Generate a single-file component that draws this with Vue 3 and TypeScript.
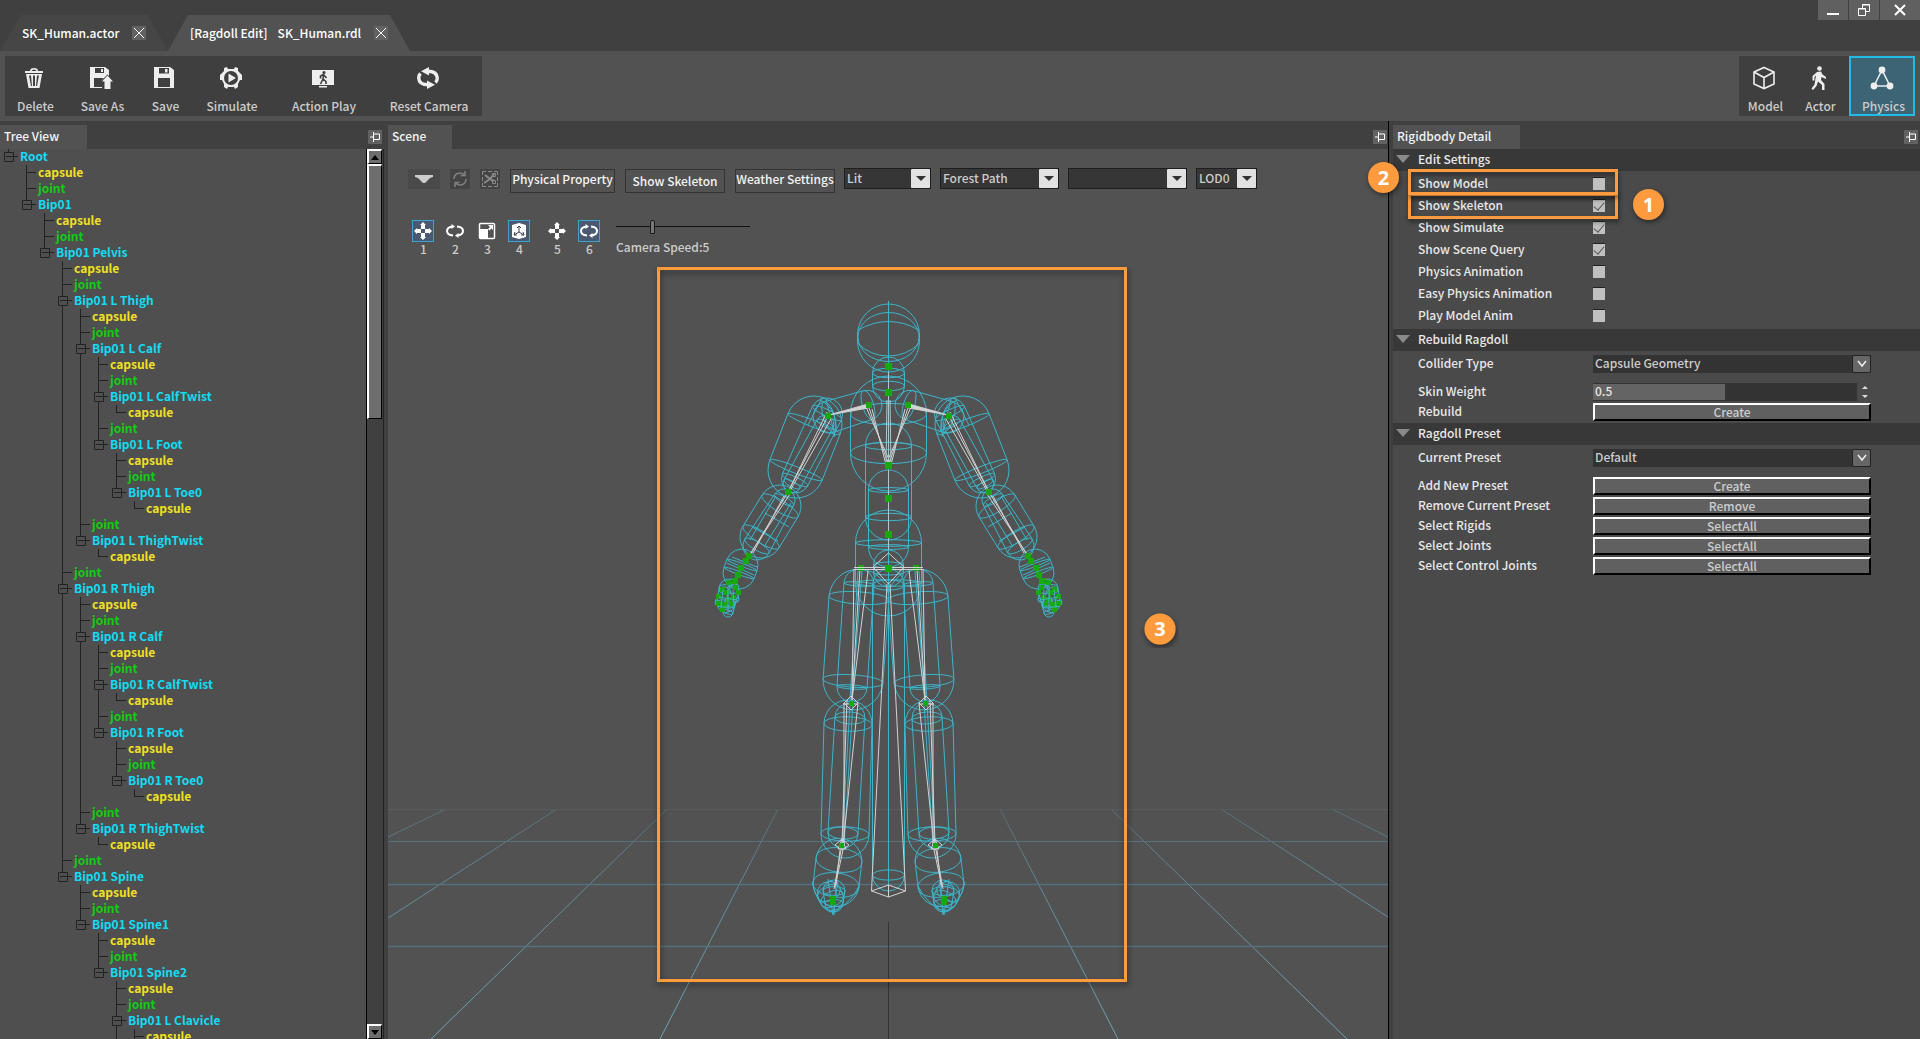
<script setup lang="ts">
import { ref } from 'vue'

type Kind = 'bone' | 'capsule' | 'joint'
interface Node { depth: number; label: string; kind: Kind; more?: boolean }

const bone = (depth: number, label: string, more = false): Node => ({ depth, label, kind: 'bone', more })
const cap = (depth: number): Node => ({ depth, label: 'capsule', kind: 'capsule' })
const joint = (depth: number): Node => ({ depth, label: 'joint', kind: 'joint' })

const leg = (side: string): Node[] => [
  bone(3, `Bip01 ${side} Thigh`), cap(4), joint(4),
  bone(4, `Bip01 ${side} Calf`), cap(5), joint(5),
  bone(5, `Bip01 ${side} CalfTwist`), cap(6), joint(5),
  bone(5, `Bip01 ${side} Foot`), cap(6), joint(6),
  bone(6, `Bip01 ${side} Toe0`), cap(7), joint(4),
  bone(4, `Bip01 ${side} ThighTwist`), cap(5), joint(3),
]

const nodes: Node[] = [
  bone(0, 'Root'), cap(1), joint(1),
  bone(1, 'Bip01'), cap(2), joint(2),
  bone(2, 'Bip01 Pelvis'), cap(3), joint(3),
  ...leg('L'), ...leg('R'),
  bone(3, 'Bip01 Spine'), cap(4), joint(4),
  bone(4, 'Bip01 Spine1'), cap(5), joint(5),
  bone(5, 'Bip01 Spine2'), cap(6), joint(6),
  bone(6, 'Bip01 L Clavicle', true), cap(7),
]

// true when a sibling at the given depth follows row i
function continues(i: number, depth: number): boolean {
  for (let j = i + 1; j < nodes.length; j++) {
    if (nodes[j].depth < depth) return false
    if (nodes[j].depth === depth) return true
  }
  for (let j = nodes.length - 1; j >= 0; j--) {
    if (nodes[j].depth === depth) return j <= i && !!nodes[j].more
    if (nodes[j].depth < depth) return false
  }
  return false
}

function guide(i: number, level: number): string {
  const n = nodes[i]
  if (level < n.depth) return level > 0 && continues(i, level) ? 'M6.5 0V16' : ''
  const down = continues(i, level) || (n.kind !== 'bone' && i === nodes.length - 1)
  if (n.kind === 'bone') return `M6.5 0V3M2.5 3.5H11.5V12.5H2.5ZM4 7.5H16${down ? 'M6.5 13V16' : ''}`
  return `M6.5 0V${down ? 16 : 8}M6 7.5H16`
}

const tree = nodes.map((n, i) => ({
  ...n,
  guides: Array.from({ length: n.depth + 1 }, (_, l) => guide(i, l)),
}))

interface Check { id: string; label: string; on: boolean }
const checks = ref<Check[]>([
  { id: 'show-model', label: 'Show Model', on: false },
  { id: 'show-skeleton', label: 'Show Skeleton', on: true },
  { id: 'show-simulate', label: 'Show Simulate', on: true },
  { id: 'show-query', label: 'Show Scene Query', on: true },
  { id: 'physics-anim', label: 'Physics Animation', on: false },
  { id: 'easy-anim', label: 'Easy Physics Animation', on: false },
  { id: 'play-anim', label: 'Play Model Anim', on: false },
])

const presetActions = [
  { label: 'Add New Preset', action: 'Create' },
  { label: 'Remove Current Preset', action: 'Remove' },
  { label: 'Select Rigids', action: 'SelectAll' },
  { label: 'Select Joints', action: 'SelectAll' },
  { label: 'Select Control Joints', action: 'SelectAll' },
]

const skinWeight = ref('0.5')
const speed = ref(26)

// Wireframe capsule between two centres, with a ring at each end
function capsule(x1: number, y1: number, r1: number, x2: number, y2: number, r2: number, k = 0.22): string {
  const a = Math.atan2(y2 - y1, x2 - x1)
  const nx = -Math.sin(a)
  const ny = Math.cos(a)
  const deg = ((a * 180) / Math.PI - 90).toFixed(1)
  const pt = (x: number, y: number, r: number) => `${(x + nx * r).toFixed(1)} ${(y + ny * r).toFixed(1)}`
  const ring = (x: number, y: number, r: number) =>
    `M${pt(x, y, r)}A${r} ${r * k} ${deg} 1 0 ${pt(x, y, -r)}A${r} ${r * k} ${deg} 1 0 ${pt(x, y, r)}`
  return `M${pt(x1, y1, r1)}L${pt(x2, y2, r2)}A${r2} ${r2} 0 0 0 ${pt(x2, y2, -r2)}`
    + `L${pt(x1, y1, -r1)}A${r1} ${r1} 0 0 0 ${pt(x1, y1, r1)}`
    + ring(x1, y1, r1) + ring(x2, y2, r2)
}

const core = [
  'M857.5 335A31 31 0 0 1 919.5 335V341A31 31 0 0 1 857.5 341Z',
  'M858 337A30.5 24.5 0 1 1 919 337A30.5 24.5 0 1 1 858 337',
  'M858 330Q888.5 313 919 330M857.5 343Q870 356 888.5 356T919.5 343',
  capsule(888.5, 373, 16, 888.5, 386, 16, 0.3),
  capsule(888.5, 414, 38, 888.5, 453, 38, 0.28),
  capsule(888.5, 446, 23, 888.5, 517, 23, 0.16),
  capsule(888.5, 490, 20, 888.5, 547, 20, 0.12),
  capsule(888.5, 543, 33, 888.5, 583, 33, 0.1),
  capsule(888.5, 565, 15, 888.5, 572, 15, 0.2),
  capsule(888.5, 585, 16, 888.5, 875, 16, 0.32),
  'M888.5 301V892',
]

const half = [
  // shoulder and arm
  capsule(868, 405, 15, 829, 417, 16, 0.35),
  capsule(814, 424, 28, 796, 470, 28, 0.12),
  capsule(827, 413, 16, 795, 480, 14, 0.2),
  capsule(825, 424, 9, 792, 484, 9, 0.3),
  'M822 398L808 425M826 399L835 436M820 400Q840 410 834 437',
  capsule(780, 506, 21, 761, 537, 21, 0.28),
  capsule(784, 500, 11, 757, 546, 14, 0.3),
  'M776 496L750 540M791 503L764 547M765 513L789 527M752 527L778 541',
  capsule(742, 565, 16, 739, 573, 16, 0.1),
  'M727 563L754 575M732 557L757 567',
  // hand
  capsule(729, 589, 10, 726, 604, 9, 0.4),
  capsule(733, 586, 4, 736, 600, 3, 0.4),
  capsule(724, 592, 5, 719, 603, 4, 0.4),
  capsule(730, 604, 5, 728, 612, 5, 0.4),
  // leg
  capsule(859, 598, 30, 853, 681, 30, 0.2),
  capsule(859, 584, 15, 852, 687, 15, 0.14),
  capsule(848, 724, 24, 845, 834, 24, 0.3),
  capsule(850, 718, 15, 843, 833, 15, 0.4),
  'M862 571L852 700M858 571L850 700M850 703L842 845M853 703L844 845',
  // foot
  capsule(839, 860, 23, 836, 885, 23, 0.5),
  'M812 882Q818 905 827 910Q833 915 840 908Q852 900 859 886',
  capsule(829, 893, 12, 832, 899, 12, 0.6),
  capsule(834, 891, 11, 834, 903, 9, 0.4),
  'M828 879L833 915L838 880M826 884Q834 876 836 890L834 915',
]

const whiteHalf = [
  'M854 569L852 700M868 571L852 700M860 569L852 698',
  'M844 703V845M858 703L843 845M847 700L842 843',
  'M851 696L858 703L851 710L844 703ZM843 704H858',
  'M842 839L849 845L842 850L835 845ZM842 839L838 849H846Z',
  'M827 412L790 488M831 419L790 491M828 416L788 492L750 555M784 496L753 553M790 494L750 554',
  'M868 405L888.5 465M872 409L886 465M866 407L890 462',
]

const joints = [[869, 405], [828, 416], [788, 492], [749, 556], [746, 561], [741, 568], [738, 575], [735, 581], [861, 568]]
const fingers = [[728, 582], [722, 589], [735, 587], [718, 596], [726, 592], [733, 597], [718, 603], [724, 604], [731, 604], [728, 599], [738, 592], [722, 609]]
const spineJoints = [366, 392, 465, 498, 534, 568]
</script>

<template>
  <div class="app">
    <header class="titlebar">
      <div class="doc-tab first">
        <span>SK_Human.actor</span>
        <button class="close" aria-label="Close SK_Human.actor"><svg viewBox="0 0 14 14"><path d="M2 2L12 12M12 2L2 12" /></svg></button>
      </div>
      <div class="doc-tab second">
        <span class="mode">[Ragdoll Edit]</span><span>SK_Human.rdl</span>
        <button class="close" aria-label="Close SK_Human.rdl"><svg viewBox="0 0 14 14"><path d="M2 2L12 12M12 2L2 12" /></svg></button>
      </div>
      <div class="window-buttons">
        <button aria-label="Minimize"><svg width="14" height="14" viewBox="0 0 14 14"><path d="M1 11H13" stroke="#fff" stroke-width="2" /></svg></button>
        <button aria-label="Restore"><svg width="14" height="14" viewBox="0 0 14 14" fill="none" stroke="#fff"><path d="M5.500 5V1.500H12.500V8.500H9M1.500 5.500H8.500V12.500H1.500Z" /><path d="M5 2H13M1 6H9" /></svg></button>
        <button class="wide" aria-label="Close window"><svg width="14" height="14" viewBox="0 0 14 14"><path d="M2 2L12 12M12 2L2 12" stroke="#fff" stroke-width="2" /></svg></button>
      </div>
    </header>

    <div class="ribbon">
      <nav class="tools">
        <button class="tool" style="width: 58px">
          <svg viewBox="0 0 24 24"><path d="M3 5H21V7H3ZM8 5Q8 2 12 2T16 5H14.500Q14 3.500 12 3.500T9.500 5Z" /><path fill-rule="evenodd" d="M4 8H20L17.500 22H6.500ZM7 9.500L9 20H10L9 9.500ZM11 9.500V20H13V9.500ZM15 9.500L14 20H15L17 9.500Z" /></svg>
          <span>Delete</span>
        </button>
        <button class="tool" style="width: 76px">
          <svg viewBox="0 0 24 24"><path fill-rule="evenodd" d="M1 1H16L20 4V10L18.500 8.500L12 15V21H13V22H1ZM6 2V7H15V2ZM5 12V21H12V15L14.500 12ZM12 3H14V6H12Z" /><path d="M18.500 9.500L24 15.500H21.500V23H15.500V15.500H13Z" /></svg>
          <span>Save As</span>
        </button>
        <button class="tool" style="width: 50px">
          <svg viewBox="0 0 24 24"><path fill-rule="evenodd" d="M2 1H18L22 4V22H2ZM7 2V7.500H17V2ZM6 12V21H18V12ZM13 3H15.500V6.500H13Z" /></svg>
          <span>Save</span>
        </button>
        <button class="tool" style="width: 83px">
          <svg viewBox="0 0 24 24"><path d="M5 2L8 1L9 3H15L16 1L19 2L19 5L21 7L23 9V14H21L19 18L19 21L16 23L15 21H9L8 23L5 21V18L3 14H1V9L3 7L5 5Z" /><circle cx="12" cy="12" r="7" fill="#3f3f3f" /><path d="M9.500 7.500L17 12L9.500 16.500Z" /></svg>
          <span>Simulate</span>
        </button>
        <button class="tool" style="width: 101px">
          <svg viewBox="0 0 24 24"><path d="M1 4H23V19H1ZM8 20H16V21.500H8Z" /><g fill="none" stroke="#3f3f3f" stroke-width="1.600"><path d="M12.500 8L12 13L15 15.500V18M12 13L9.500 18M12.500 8.500L9.500 10V12.500M12.500 8.500L15.500 12" /><circle cx="13" cy="6.500" r="0.800" /></g></svg>
          <span>Action Play</span>
        </button>
        <button class="tool" style="width: 109px">
          <svg viewBox="0 0 24 24"><g fill="none" stroke="#eee" stroke-width="3.400"><path d="M11 5.200Q21 5 21.300 12Q21.300 14.500 19.500 16.500" /><path d="M4.500 7.500Q2.700 9.500 2.700 12Q3 19 13 18.800" /></g><path d="M13 1V9.500L5 5.200ZM11 14.500V23L19 18.800Z" /></svg>
          <span>Reset Camera</span>
        </button>
      </nav>
      <nav class="modes">
        <button class="tool" style="width: 50px">
          <svg viewBox="0 0 24 24" fill="none" stroke="#eee" stroke-width="1.600"><path d="M12 1.500L22 6V18L12 22.500L2 18V6ZM2 6L12 11.500L22 6M12 11.500V22.500" /></svg>
          <span>Model</span>
        </button>
        <button class="tool" style="width: 60px">
          <svg viewBox="0 0 24 24"><circle cx="12.500" cy="2.500" r="2.300" /><path d="M10 6L14 5.500L15.500 8.500L19 11V13L14.500 11L14 14L17.500 18V24H15V19L11 15.500L9.500 20L6 24L4.500 22.500L7.500 18.500L9 9.500L7.500 11V14.500H5.500V10Z" /></svg>
          <span>Actor</span>
        </button>
        <button class="tool active">
          <svg viewBox="0 0 24 24"><path d="M12 4L4 20H20Z" fill="none" stroke="#eee" stroke-width="1.500" /><circle cx="12" cy="4" r="3.400" /><circle cx="4" cy="20" r="3.400" /><circle cx="20" cy="20" r="3.400" /></svg>
          <span>Physics</span>
        </button>
      </nav>
    </div>

    <main class="workspace">
      <section class="panel tree-panel">
        <div class="panel-head">
          <h2 class="panel-tab tree-tab">Tree View</h2>
          <button class="pin" aria-label="Pin Tree View"><svg viewBox="0 0 14 14"><path d="M2 7H5M5.500 2V12M6 4H11.500V9.500H6" /></svg></button>
        </div>
        <div class="tree-body">
          <ul class="tree">
            <li v-for="(n, i) in tree" :key="i">
              <svg v-for="(g, l) in n.guides" :key="l" class="guide" viewBox="0 0 18 16"><path :d="g" /></svg>
              <span :class="n.kind">{{ n.label }}</span>
            </li>
          </ul>
          <div class="scrollbar">
            <button class="bevel step" aria-label="Scroll up"><svg viewBox="0 0 8 5"><path d="M4 0L8 5H0Z" /></svg></button>
            <div class="bevel thumb"></div>
            <button class="bevel step down" aria-label="Scroll down"><svg viewBox="0 0 8 5"><path d="M0 0H8L4 5Z" /></svg></button>
          </div>
        </div>
      </section>

      <section class="panel scene-panel">
        <div class="panel-head">
          <h2 class="panel-tab scene-tab">Scene</h2>
          <button class="pin" aria-label="Pin Scene"><svg viewBox="0 0 14 14"><path d="M2 7H5M5.500 2V12M6 4H11.500V9.500H6" /></svg></button>
        </div>
        <div class="scene">
          <svg class="viewport" viewBox="388 149 1000 890" preserveAspectRatio="xMidYMin slice">
            <defs>
              <linearGradient id="fade" gradientUnits="userSpaceOnUse" x1="0" y1="806" x2="0" y2="1039">
                <stop offset="0" stop-color="#5f8896" stop-opacity="0.5" />
                <stop offset="0.3" stop-color="#5f8896" />
                <stop offset="1" stop-color="#6fa3b5" />
              </linearGradient>
              <filter id="shade" x="-10%" y="-10%" width="120%" height="120%">
                <feDropShadow dx="1" dy="3" stdDeviation="3" flood-color="#000" flood-opacity="0.5" />
              </filter>
            </defs>
            <g fill="none" stroke="url(#fade)">
              <path d="M446 809L388 837M557 809L388 918M667 809L431 1039M778 809L660 1039M1000 809L1118 1039M1111 809L1347 1039M1221 809L1388 917M1332 809L1388 837" />
            </g>
            <path d="M388 809.500H1388" stroke="#585c5d" />
            <path d="M388 841.500H1388" stroke="#57727c" />
            <path d="M388 884.500H1388M388 946.500H1388" stroke="#54727d" stroke-width="1.500" />
            <path d="M888.500 922V1039" stroke="#333" />
            <g fill="none" stroke="#3ab6cc">
              <path v-for="(d, i) in core" :key="i" :d="d" />
            </g>
            <g v-for="t in ['', 'translate(1777 0) scale(-1 1)']" :key="t" :transform="t" fill="none">
              <path v-for="(d, i) in half" :key="'c' + i" :d="d" stroke="#3ab6cc" />
              <path v-for="(d, i) in whiteHalf" :key="'w' + i" :d="d" stroke="#d2d2d2" />
              <path d="M868 404L829 415L868 408ZM841 850L834 889M840 850L836 885M843 850L835 887" stroke="#d2d2d2" fill="#d2d2d2" />
              <g fill="#17a90f">
                <rect v-for="(p, i) in joints" :key="i" :x="p[0] - 3" :y="p[1] - 3" width="6" height="6" />
                <rect v-for="(p, i) in fingers" :key="'f' + i" :x="p[0] - 2" :y="p[1] - 2" width="5" height="5" />
                <rect x="849" y="701" width="5" height="5" />
                <rect x="839" y="843" width="5" height="5" />
                <rect x="830" y="896" width="6" height="9" />
              </g>
              <path d="M728 586V612M723 590L721 606M733 590L734 606M719 597L737 600M720 607H735" stroke="#3ab6cc" />
            </g>
            <g fill="none" stroke="#d2d2d2">
              <path d="M854 569.500H923M854 567.500H923M888.500 553L904 567L888.500 584L873 567Z" />
              <path d="M887 584L871.500 891M890 584L905.500 891M871.500 891L888.500 885L905.500 891L888.500 897ZM888.500 885V897" />
              <path d="M888.500 372V465M887 400L886 465M890 400L891 465M888.500 470V550" stroke="#a9c9d0" />
            </g>
            <rect v-for="y in spineJoints" :key="y" x="885" :y="y - 3" width="7" height="7" fill="#17a90f" />
            <rect x="658.500" y="268.500" width="467" height="712" fill="none" stroke="#ff9b3e" stroke-width="3" filter="url(#shade)" />
            <g filter="url(#shade)"><circle cx="1160" cy="629" r="15.500" fill="#ff9b3e" /></g>
            <text x="1160" y="636" class="badge-text">3</text>
          </svg>

          <div class="scene-bar">
            <div class="group">
              <button class="icon-btn menu" aria-label="View menu"><svg width="18" height="9" viewBox="0 0 18 9"><path d="M0 0H18V2L15 3L10 8H8L3 3L0 2Z" fill="#ccc" /></svg></button>
              <button class="icon-btn" aria-label="Refresh"><svg width="14" height="16" viewBox="0 0 14 16" fill="none" stroke="#808080" stroke-width="1.500"><path d="M1 8A6 6 0 0 1 11 3.500M12 0V4.500H7.500M13 8A6 6 0 0 1 3 12.500M2 16V11.500H6.500" /></svg></button>
              <button class="icon-btn" aria-label="Physics links"><svg width="18" height="18" viewBox="0 0 18 18" fill="none" stroke="#8a8a8a"><path d="M1.500 5V1.500H5M7 1.500H11M13 1.500H16.500V5M16.500 7V11M16.500 13V16.500H13M11 16.500H7M5 16.500H1.500V13M1.500 11V7" /><path d="M3 13L9 9L4 5M9 9L13 4M9 9L13 11" stroke-width="2" /><path d="M11.500 3.500H14.500V6.500H11.500ZM11.500 10.500H14.500V13.500H11.500Z" /></svg></button>
              <button class="text-btn snug" style="width: 105px">Physical Property</button>
              <button class="text-btn">Show Skeleton</button>
              <button class="text-btn snug">Weather Settings</button>
            </div>
            <div class="group selects">
              <span class="combo" style="width: 87px"><select aria-label="View mode"><option>Lit</option></select><i><svg viewBox="0 0 10 5"><path d="M0 0H10L5 5Z" /></svg></i></span>
              <span class="combo" style="width: 119px"><select aria-label="Environment"><option>Forest Path</option></select><i><svg viewBox="0 0 10 5"><path d="M0 0H10L5 5Z" /></svg></i></span>
              <span class="combo" style="width: 119px"><select aria-label="Animation"><option></option></select><i><svg viewBox="0 0 10 5"><path d="M0 0H10L5 5Z" /></svg></i></span>
              <span class="combo" style="width: 61px"><select aria-label="Level of detail"><option>LOD0</option></select><i><svg viewBox="0 0 10 5"><path d="M0 0H10L5 5Z" /></svg></i></span>
            </div>
          </div>

          <div class="gizmo-bar">
            <div class="gizmos">
              <button class="gizmo on"><svg viewBox="0 0 20 20"><path d="M10 1L13 4H12V8H8V4H7ZM10 19L7 16H8V12H12V16H13ZM1 10L4 7V8H8V12H4V13ZM19 10L16 13V12H12V8H16V7Z" /><rect x="9" y="9" width="2" height="2" fill="#4a5872" /></svg><span>1</span></button>
              <button class="gizmo"><svg viewBox="0 0 20 20"><g fill="none" stroke="#fff" stroke-width="2"><path d="M8 14.500Q2 14 2 10Q2 6 8 5.500M12 5.500Q18 6 18 10Q18 14 12 14.500" /></g><path d="M6.500 3L10 5.500L6.500 8ZM13.500 12L10 14.500L13.500 17Z" /></svg><span>2</span></button>
              <button class="gizmo"><svg viewBox="0 0 20 20"><rect x="2.500" y="2.500" width="15" height="15" rx="1" fill="none" stroke="#fff" stroke-width="1.500" /><path d="M3 8H11V17H3ZM11 4H16V9L14.500 7.500L12.500 9.500L11 8L13 6Z" /></svg><span>3</span></button>
              <button class="gizmo on"><svg viewBox="0 0 20 20"><path d="M10 2L17 4V16L10 18L3 16V4Z" /><path d="M10 5V11L5 14M10 11L15 14M8 7L10 5L12 7M6 11L5 14L8 14M14 11L15 14L12 14" fill="none" stroke="#3c465c" /></svg><span>4</span></button>
            </div>
            <div class="gizmos">
              <button class="gizmo"><svg viewBox="0 0 20 20"><path d="M10 1L13 4H12V8H8V4H7ZM10 19L7 16H8V12H12V16H13ZM1 10L4 7V8H8V12H4V13ZM19 10L16 13V12H12V8H16V7Z" /><rect x="9" y="9" width="2" height="2" fill="#525252" /></svg><span>5</span></button>
              <button class="gizmo on"><svg viewBox="0 0 20 20"><g fill="none" stroke="#fff" stroke-width="2"><path d="M8 14.500Q2 14 2 10Q2 6 8 5.500M12 5.500Q18 6 18 10Q18 14 12 14.500" /></g><path d="M6.500 3L10 5.500L6.500 8ZM13.500 12L10 14.500L13.500 17Z" /></svg><span>6</span></button>
            </div>
            <div class="speed">
              <input id="speed" v-model="speed" type="range" min="0" max="100" />
              <label for="speed">Camera Speed:5</label>
            </div>
          </div>
        </div>
      </section>

      <section class="panel detail-panel">
        <div class="panel-head">
          <h2 class="panel-tab detail-tab">Rigidbody Detail</h2>
          <button class="pin" aria-label="Pin Rigidbody Detail"><svg viewBox="0 0 14 14"><path d="M2 7H5M5.500 2V12M6 4H11.500V9.500H6" /></svg></button>
        </div>
        <div class="detail">
          <h3>Edit Settings</h3>
          <div class="checks">
            <div v-for="c in checks" :key="c.id" class="check-row">
              <label :for="c.id">{{ c.label }}</label>
              <input :id="c.id" v-model="c.on" type="checkbox" />
            </div>
            <div class="mark mark-skeleton"></div>
            <div class="mark mark-model"></div>
            <span class="badge badge-1">1</span>
            <span class="badge badge-2">2</span>
          </div>

          <h3>Rebuild Ragdoll</h3>
          <div class="fields">
            <div class="field spaced">
              <label for="collider">Collider Type</label>
              <span class="drop"><select id="collider"><option>Capsule Geometry</option></select><i><svg viewBox="0 0 10 8"><path d="M1 1L5 6L9 1" /></svg></i></span>
            </div>
            <div class="field">
              <label for="weight">Skin Weight</label>
              <span class="number">
                <input id="weight" v-model="skinWeight" type="text" />
                <span class="spin">
                  <button aria-label="Increase"><svg viewBox="0 0 6 3"><path d="M3 0L6 3H0Z" /></svg></button>
                  <button aria-label="Decrease"><svg viewBox="0 0 6 3"><path d="M0 0H6L3 3Z" /></svg></button>
                </span>
              </span>
            </div>
            <div class="field">
              <span>Rebuild</span>
              <button class="bevel wide-btn">Create</button>
            </div>
          </div>

          <h3>Ragdoll Preset</h3>
          <div class="fields">
            <div class="field spaced">
              <label for="preset">Current Preset</label>
              <span class="drop"><select id="preset"><option>Default</option></select><i><svg viewBox="0 0 10 8"><path d="M1 1L5 6L9 1" /></svg></i></span>
            </div>
            <div v-for="p in presetActions" :key="p.label" class="field">
              <span>{{ p.label }}</span>
              <button class="bevel wide-btn">{{ p.action }}</button>
            </div>
          </div>
        </div>
      </section>
    </main>
  </div>
</template>

<style>
body {
  background: #404040;
}
</style>

<style scoped>
.app {
  display: flex;
  flex-direction: column;
  height: 100vh;
  overflow: hidden;
  background: #404040;
  color: #e8e8e8;
  font: 500 12px/16px "Noto Sans CJK SC", "Noto Sans", sans-serif;
}
.app * {
  box-sizing: border-box;
}
button,
input,
select {
  margin: 0;
  padding: 0;
  border: 0;
  border-radius: 0;
  background: none;
  color: inherit;
  font: inherit;
}
h2,
h3,
ul {
  margin: 0;
  padding: 0;
  font: inherit;
}
svg {
  display: block;
}

/* title bar */
.titlebar {
  display: flex;
  flex: none;
  align-items: flex-end;
  height: 51px;
}
.doc-tab {
  display: flex;
  align-items: center;
  height: 36px;
  padding: 0 22px 1px;
  color: #fff;
  white-space: pre;
}
.doc-tab.first {
  width: 168px;
  background: #464646;
  clip-path: polygon(0 100%, 21px 0, calc(100% - 20px) 0, 100% 100%);
}
.doc-tab.second {
  width: 242px;
  background: #525252;
  clip-path: polygon(0 100%, 20px 0, calc(100% - 20px) 0, 100% 100%);
}
.mode {
  margin-right: 10px;
}
.close {
  width: 14px;
  height: 14px;
  margin-left: auto;
  background: #626262;
}
.close path {
  stroke: #fff;
  fill: none;
}
.window-buttons {
  display: flex;
  gap: 1px;
  align-self: flex-start;
  margin-left: auto;
}
.window-buttons button {
  display: grid;
  place-items: center;
  width: 30px;
  height: 20px;
  background: #606060;
}
.window-buttons .wide {
  width: 40px;
}

/* ribbon */
.ribbon {
  display: flex;
  flex: none;
  justify-content: space-between;
  height: 70px;
  padding: 5px;
  background: #525252;
}
.tools,
.modes {
  display: flex;
  height: 60px;
  background: #3f3f3f;
}
.tool {
  display: flex;
  flex-direction: column;
  align-items: center;
  padding-top: 10px;
  color: #ccc;
  white-space: nowrap;
}
.tool svg {
  width: 24px;
  height: 24px;
  margin-bottom: 8px;
}
.tool svg:not([fill]) {
  fill: #eee;
}
.tool span {
  padding-left: 3px;
}
.tool.active {
  width: 66px;
  padding-top: 8px;
  border: 2px solid #1fbce6;
  background: #3c6475;
}

/* panels */
.workspace {
  display: flex;
  flex: 1;
  min-height: 0;
}
.panel {
  display: flex;
  flex-direction: column;
  min-width: 0;
}
.tree-panel {
  flex: 0 0 384px;
  margin-right: 4px;
}
.scene-panel {
  flex: 1;
  border-right: 1px solid #000;
  margin-right: 4px;
}
.detail-panel {
  flex: 0 0 527px;
}
.panel-head {
  display: flex;
  flex: none;
  align-items: center;
  justify-content: space-between;
  height: 28px;
  padding: 4px 2px 0 0;
}
.scene-panel .panel-head {
  padding-right: 1px;
}
.panel-tab {
  height: 24px;
  padding-left: 4px;
  background: #525252;
  color: #f2f2f2;
  line-height: 22px;
}
.tree-tab {
  width: 87px;
}
.scene-tab {
  width: 64px;
}
.detail-tab {
  width: 127px;
}
.pin {
  width: 14px;
  height: 14px;
  background: #626262;
}
.pin path {
  fill: none;
  stroke: #fff;
}

/* tree */
.tree-body {
  display: flex;
  flex: 1;
  min-height: 0;
  background: #4f4f4f;
}
.tree {
  flex: 1;
  padding-left: 2px;
  font-weight: 700;
  line-height: 14px;
  list-style: none;
}
.tree li {
  display: flex;
  height: 16px;
  white-space: nowrap;
}
.guide {
  width: 18px;
  height: 16px;
}
.guide path {
  fill: none;
  stroke: #222;
}
.bone {
  color: #12dcf5;
}
.capsule {
  color: #f0e022;
}
.joint {
  color: #12cc12;
}
.scrollbar {
  display: flex;
  flex-direction: column;
  width: 18px;
  padding-right: 1px;
  border-left: 1px solid #000;
  border-right: 1px solid #222;
  background: #404040;
}
.bevel {
  border: 2px solid #000;
  border-top-color: #fff;
  border-left-color: #fff;
  background: #606060;
}
.scrollbar .bevel {
  border-width: 2px 1px 1px 2px;
  background: #6e6e6e;
}
.step {
  display: grid;
  flex: none;
  place-items: center;
  height: 15px;
}
.step svg {
  width: 8px;
  height: 5px;
}
.thumb {
  height: 255px;
}
.down {
  margin-top: auto;
}

/* scene */
.scene {
  position: relative;
  flex: 1;
  min-height: 0;
  background: #525252;
}
.viewport {
  position: absolute;
  inset: 0;
  width: 100%;
  height: 100%;
}
.badge-text {
  fill: #fff;
  font: 700 20px "Open Sans", sans-serif;
  text-anchor: middle;
}
.scene-bar {
  position: relative;
  display: flex;
  gap: 9px;
  padding: 19px 0 0 20px;
}
.group {
  display: flex;
  gap: 10px;
  align-items: flex-start;
  padding-top: 1px;
}
.selects {
  gap: 9px;
  padding-top: 0;
}
.icon-btn {
  display: grid;
  place-items: center;
  width: 20px;
  height: 20px;
  background: #444;
}
.icon-btn.menu {
  width: 32px;
  background: #4a4a4a;
}
.text-btn {
  width: 100px;
  height: 24px;
  border: 1px solid #333;
  background: #525252;
  color: #f2f2f2;
  white-space: nowrap;
}
.text-btn.snug {
  padding-bottom: 4px;
}
.combo {
  position: relative;
  display: flex;
  height: 21px;
  border: 1px solid #1e1e1e;
  background: #363636;
}
.combo select,
.drop select {
  width: 100%;
  appearance: none;
  color: #ccc;
}
.combo select {
  padding: 0 20px 1px 2px;
}
.combo i {
  position: absolute;
  top: 0;
  right: 0;
  display: grid;
  place-items: center;
  width: 19px;
  height: 19px;
  border-radius: 1px;
  background: #e2e2e2;
  pointer-events: none;
}
.combo svg {
  width: 10px;
  height: 5px;
  fill: #333;
}
.gizmo-bar {
  position: relative;
  display: flex;
  gap: 16px;
  padding: 27px 0 0 24px;
}
.gizmos {
  display: flex;
  gap: 10px;
}
.gizmo {
  display: flex;
  flex-direction: column;
  align-items: center;
  width: 22px;
  color: #ccc;
}
.gizmo svg {
  width: 22px;
  height: 22px;
  border: 1px solid transparent;
  fill: #fff;
}
.gizmo span {
  padding-left: 1px;
  line-height: 14px;
}
.gizmo.on svg {
  border-color: #38a5d0;
  background: #4a5872;
}
.speed {
  display: flex;
  flex-direction: column;
  color: #ccc;
}
.speed input {
  width: 134px;
  height: 14px;
  margin-bottom: 5px;
  appearance: none;
  background: linear-gradient(#111, #111) 0 6px / 100% 1px no-repeat;
}
.speed input::-webkit-slider-thumb {
  appearance: none;
  width: 5px;
  height: 14px;
  border: 1px solid #1a1a1a;
  border-radius: 2px 2px 0 0;
  background: #777;
}

/* details */
.detail {
  flex: 1;
  background: #4a4a4a;
}
h3 {
  position: relative;
  height: 22px;
  padding-left: 25px;
  background: #383838;
  line-height: 20px;
}
h3::before {
  content: "";
  position: absolute;
  top: 6px;
  left: 3px;
  border: 7px solid transparent;
  border-top: 8px solid #8a8a8a;
  border-bottom: 0;
}
.checks {
  position: relative;
  padding: 1px 0 3px;
}
.check-row {
  display: flex;
  align-items: center;
  height: 22px;
  padding-left: 25px;
}
.check-row label,
.field > :first-child {
  flex: 0 0 175px;
}
.field > :first-child {
  padding-bottom: 2px;
}
.check-row input {
  position: relative;
  width: 12px;
  height: 13px;
  border-top: 1px solid #222;
  appearance: none;
  background: #c0c0c0;
}
.check-row input:checked::after {
  content: "";
  position: absolute;
  top: 0;
  left: 3px;
  width: 5px;
  height: 9px;
  border: solid #555;
  border-width: 0 1px 1px 0;
  transform: rotate(40deg);
}
.mark {
  position: absolute;
  left: 15px;
  width: 210px;
  height: 26px;
  border: 3px solid #ff9b3e;
  filter: drop-shadow(1px 3px 2px rgba(0, 0, 0, 0.5));
  pointer-events: none;
}
.mark-model {
  top: -2px;
}
.mark-skeleton {
  top: 22px;
}
.badge {
  position: absolute;
  width: 31px;
  height: 31px;
  border-radius: 50%;
  background: #ff9b3e;
  box-shadow: 1px 2px 5px rgba(0, 0, 0, 0.5);
  color: #fff;
  font: 700 20px/31px "Open Sans", sans-serif;
  text-align: center;
}
.badge-1 {
  top: 18px;
  left: 240px;
}
.badge-2 {
  top: -9px;
  left: -25px;
}
.fields {
  padding: 3px 0 1px;
}
.field {
  display: flex;
  align-items: center;
  height: 20px;
  padding-left: 25px;
}
.field.spaced {
  margin-bottom: 8px;
}
.drop,
.number {
  position: relative;
  display: flex;
  width: 278px;
  height: 18px;
}
.drop select {
  padding: 0 20px 2px 2px;
  background: #333;
}
.drop i {
  position: absolute;
  top: 0;
  right: 0;
  display: grid;
  place-items: center;
  width: 19px;
  height: 18px;
  border: 1px solid #222;
  border-radius: 2px;
  background: #666;
  pointer-events: none;
}
.drop svg {
  width: 10px;
  height: 8px;
  fill: none;
  stroke: #eee;
  stroke-width: 1.5;
}
.number input {
  width: 264px;
  padding: 0 2px 2px;
  border: solid #333;
  border-width: 1px 0;
  background: linear-gradient(90deg, #646464 50%, #333 50%);
}
.spin {
  display: flex;
  flex-direction: column;
  justify-content: space-between;
  padding: 3px 0 3px 5px;
}
.spin button {
  width: 6px;
  height: 3px;
}
.spin svg {
  width: 6px;
  height: 3px;
  fill: #ddd;
}
.wide-btn {
  width: 278px;
  height: 18px;
  padding-bottom: 1px;
  color: #ccc;
  line-height: 12px;
}
</style>
